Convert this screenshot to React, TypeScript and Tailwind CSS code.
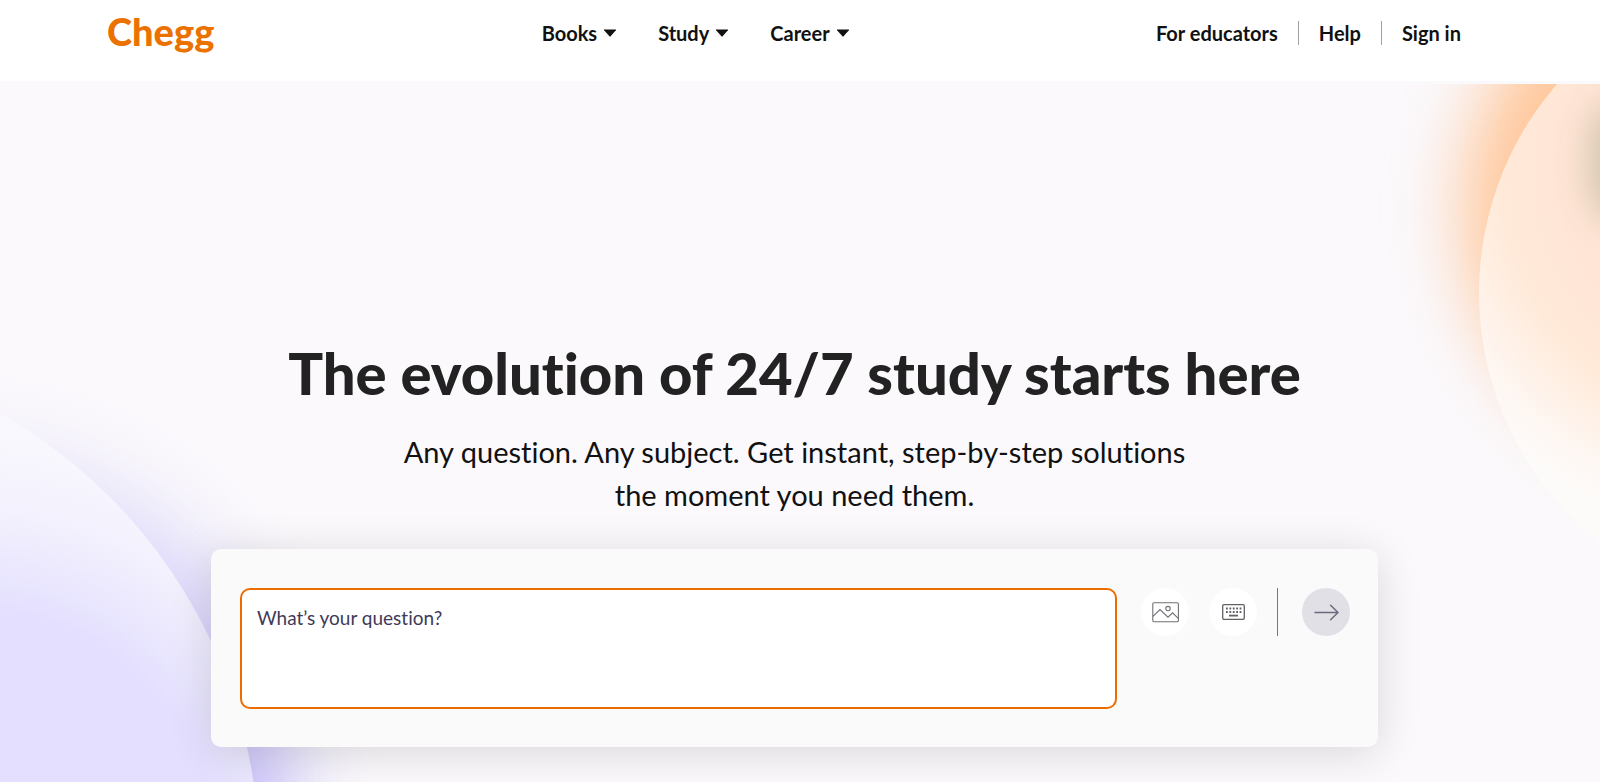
import type { ReactNode } from 'react';

const menus = ['Books', 'Study', 'Career'];
const links = ['For educators', 'Help', 'Sign in'];

function Caret() {
  return (
    <svg width="12" height="8" viewBox="0 0 12 8" fill="currentColor" aria-hidden="true">
      <path d="M.3.6h11.4c.3 0 .4.3.2.6L6.6 7.3a.8.8 0 0 1-1.2 0L.1 1.2C-.1.9 0 .6.3.6Z" />
    </svg>
  );
}

function ImageIcon() {
  return (
    <svg width="27" height="21" viewBox="0 0 27 21" fill="none" stroke="#6f7074" strokeWidth="1.1" aria-hidden="true">
      <rect x=".8" y=".8" width="25.6" height="19" rx="1.2" />
      <circle cx="16" cy="6.6" r="2.2" />
      <path d="M1 14.4 8 7.6l8 7.6 4.6-4.4 5.6 5.6" />
    </svg>
  );
}

function KeyboardIcon() {
  return (
    <svg width="23" height="16" viewBox="0 0 23 16" fill="none" stroke="#606166" aria-hidden="true">
      <rect x=".7" y=".7" width="21.6" height="14.6" rx="1.2" strokeWidth="1.3" />
      <path d="M4 4.5h16M4 8h16" strokeWidth="1.8" strokeDasharray="1.8 1.6" />
      <path d="M7 11.6h9" strokeWidth="1.8" />
    </svg>
  );
}

function ArrowIcon() {
  return (
    <svg width="25" height="17" viewBox="0 0 25 17" fill="none" stroke="#6c6a7e" strokeWidth="1.5" strokeLinecap="round" strokeLinejoin="round" aria-hidden="true">
      <path d="M1 8.5h23M16.6 1.2 24 8.5l-7.4 7.3" />
    </svg>
  );
}

function RoundButton({ label, className, children }: { label: string; className: string; children: ReactNode }) {
  return (
    <button
      type="button"
      aria-label={label}
      className={`flex size-12 shrink-0 items-center justify-center rounded-full ${className}`}
    >
      {children}
    </button>
  );
}

/** Soft discs and their glows behind the hero copy, clipped by the hero. */
function Backdrop() {
  return (
    <div className="pointer-events-none absolute inset-0 overflow-hidden" aria-hidden="true">
      <div className="absolute -left-[400px] top-[344px] size-[700px] rounded-full bg-[radial-gradient(circle_at_380px_430px,#c3bbfa_0px,#c3bbfa_260px,#e2defa_345px,#f3f0fb_430px)] blur-[34px]" />
      <div className="absolute -left-[759px] top-[264px] size-[1018px] rounded-full bg-[radial-gradient(circle_at_729px_512px,#e4dfff_0px,#e4dfff_250px,#e8e5fe_280px,#f3f1fd_350px,#f9f8fe_430px)]" />
      <div className="absolute -right-[405px] -top-[144px] size-[540px] rounded-full bg-[#ffc597] blur-[36px]" />
      <div className="absolute -right-[517px] -top-[110px] size-[638px] rounded-full bg-[radial-gradient(circle_at_281px_196px,#ffe4d4_0px,#ffe5d5_200px,#ffe9d8_255px,#ffefe3_290px,#fef6f1_330px,#fcfbfa_375px)]" />
      <div className="absolute -right-[56px] top-[20px] h-[116px] w-[64px] rounded-full bg-[#cdc1ab] blur-[18px]" />
    </div>
  );
}

export default function App() {
  return (
    <div className="flex min-h-screen flex-col bg-[#fbf9fc] font-['Lato',sans-serif] text-[#111] [font-variant-ligatures:none]">
      <header className="flex h-[84px] items-start justify-between border-b-[3px] border-[#faf9fb] bg-white pl-[107px] pr-[139px]">
        <a href="#" className="pt-[6px] text-[38px] leading-[50px] font-black text-[#eb7100]">
          Chegg
        </a>
        <nav className="flex items-center gap-[42px] pt-[21px] pl-5" aria-label="Main">
          {menus.map((name) => (
            <button key={name} type="button" className="flex items-center gap-[7px] text-[20px] leading-6 font-bold">
              {name}
              <Caret />
            </button>
          ))}
        </nav>
        <nav className="flex items-center pt-[21px] text-[20px] leading-6 font-bold" aria-label="Account">
          {links.map((name) => (
            <a key={name} href="#" className="border-l border-[#a0a0a0] px-5 first:border-l-0 first:pl-0 last:pr-0">
              {name}
            </a>
          ))}
        </nav>
      </header>

      <main className="relative flex flex-1 flex-col items-center pr-[11px] pb-[35px]">
        <Backdrop />
        <div className="relative flex w-full flex-col items-center px-6 pt-[255px] text-center">
          <h1 className="text-[58px] leading-[68px] font-black text-[#222]">The evolution of 24/7 study starts here</h1>
          <p className="mt-[23px] text-[29px] leading-[43px]">
            Any question. Any subject. Get instant, step-by-step solutions
            <br />
            the moment you need them.
          </p>
        </div>
        <form className="relative mt-[33px] flex w-full max-w-[1167px] items-start rounded-[10px] bg-[#fafafa] pt-[39px] pb-[38px] pr-7 pl-[29px] shadow-[0_6px_44px_rgba(0,0,0,0.14)]">
          <textarea
            aria-label="What’s your question?"
            placeholder="What’s your question?"
            className="h-[121px] min-w-0 flex-1 resize-none rounded-[10px] border-2 border-[#ec6c00] bg-white px-[15px] py-4 text-[19px] leading-6 outline-none placeholder:text-[#403a58]"
          />
          <div className="ml-6 flex items-center">
            <RoundButton label="Upload an image" className="bg-white">
              <ImageIcon />
            </RoundButton>
            <RoundButton label="Open the keyboard" className="ml-5 bg-white">
              <KeyboardIcon />
            </RoundButton>
            <div className="mr-6 ml-5 h-12 w-px bg-[#77758a]" />
            <RoundButton label="Send" className="bg-[#e1e0e6]">
              <ArrowIcon />
            </RoundButton>
          </div>
        </form>
      </main>
    </div>
  );
}
